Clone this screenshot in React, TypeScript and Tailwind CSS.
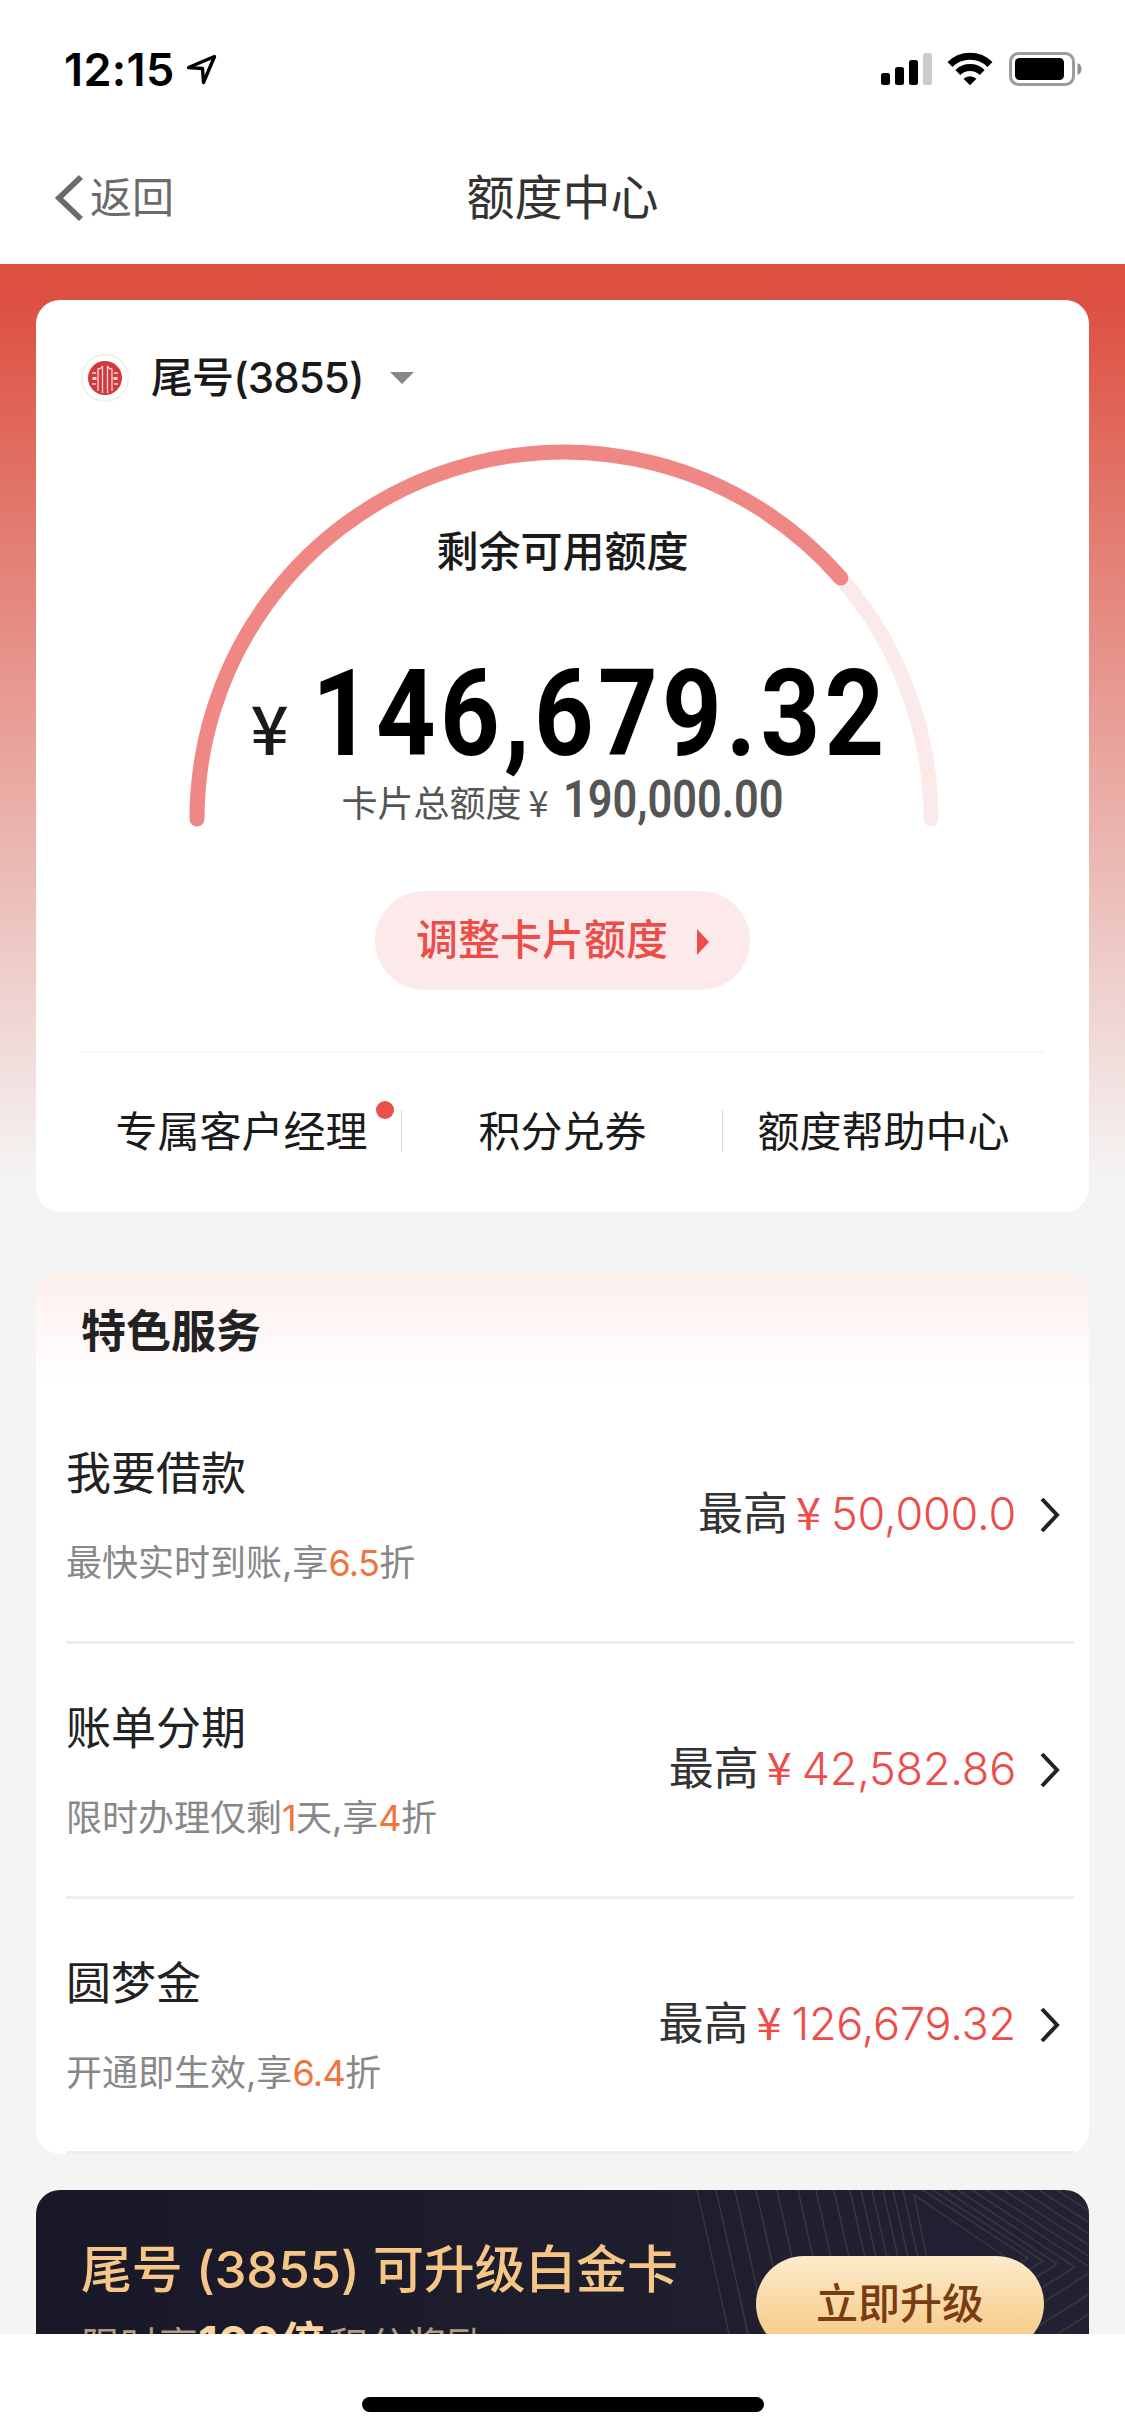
import type { ReactNode } from 'react'

const actions = [
  { label: '专属客户经理', dot: true },
  { label: '积分兑券', dot: false },
  { label: '额度帮助中心', dot: false },
]

const services = [
  { title: '我要借款', desc: ['最快实时到账,享', '6.5', '折'], amount: '50,000.0' },
  { title: '账单分期', desc: ['限时办理仅剩', '1', '天,享', '4', '折'], amount: '42,582.86' },
  { title: '圆梦金', desc: ['开通即生效,享', '6.4', '折'], amount: '126,679.32' },
]

function StatusBar() {
  return (
    <div className="h-[132px] flex items-start justify-between pl-[64px] pr-[43px] pt-[52px]">
      <div className="flex items-center gap-[11px] h-[34px]">
        <span className="text-[45px] leading-none font-semibold tracking-[0.4px] text-black">12:15</span>
        <svg width="31" height="31" viewBox="0 0 31 31" fill="none" stroke="#000" strokeWidth="3.4" strokeLinejoin="round">
          <path d="M28.500 2.500 L2.500 13.500 L16.500 14.500 L17.500 28.500 Z" />
        </svg>
      </div>
      <svg width="201" height="34" viewBox="0 0 201 34">
        <rect x="0" y="21" width="9" height="12" rx="2.5" />
        <rect x="14" y="15" width="9" height="18" rx="2.5" />
        <rect x="28" y="8" width="9" height="25" rx="2.5" />
        <rect x="42" y="1" width="9" height="32" rx="2.5" fill="#cbcbcb" />
        {/* wifi */}
        <g fill="none" stroke="#000" strokeWidth="7">
          <path d="M69 12.5 a28.5 28.5 0 0 1 40 0" />
          <path d="M76.800 20.500 a17.500 17.500 0 0 1 24.400 0" />
        </g>
        <path d="M82.500 26.800 a9.500 9.500 0 0 1 13 0 L89 33.300 Z" />
        {/* battery */}
        <rect x="129.5" y="1.5" width="63" height="31" rx="8" fill="none" stroke="#9c9c9c" strokeWidth="3" />
        <rect x="134" y="6" width="49" height="22" rx="4.5" />
        <path d="M196.500 11 a6.500 6.500 0 0 1 0 12 Z" fill="#8f8f8f" />
      </svg>
    </div>
  )
}

function NavBar() {
  return (
    <div className="h-[132px] grid grid-cols-3 items-center px-[54px]">
      <div className="flex items-center gap-[7px] text-[#6b6b6b]">
        <svg width="29" height="48" viewBox="0 0 29 48" fill="none" stroke="currentColor" strokeWidth="5.8">
          <path d="M27 3 L5 24 L27 45" />
        </svg>
        <span className="text-[42px] leading-none">返回</span>
      </div>
      <h1 className="text-[48px] leading-none text-center text-[#333]">额度中心</h1>
    </div>
  )
}

function BankLogo() {
  return (
    <svg width="48" height="48" viewBox="0 0 48 48">
      <circle cx="24" cy="24" r="23.3" fill="#fff" stroke="#ececec" strokeWidth="1.2" />
      <circle cx="24" cy="24" r="17" fill="#d2383c" />
      <g fill="none" stroke="#f7d9d9" strokeWidth="1.3">
        <path d="M17 37 V15 q4 -0.500 4.500 -3 V39" />
        <path d="M31 37 V15 q-4 -0.500 -4.500 -3 V39" />
        <path d="M11 19 h4 M11 30 h4 M33 19 h4 M33 30 h4" />
        <path d="M11.500 24.500 h4 M32.500 24.500 h4" strokeWidth="3" />
      </g>
    </svg>
  )
}

function Gauge({ used, children }: { used: number; children: ReactNode }) {
  const r = 367
  const angle = Math.PI * (1 - used)
  const x = 376 + r * Math.cos(angle)
  const y = 375 - r * Math.sin(angle)
  return (
    <div className="relative w-[750px] h-[383px] mx-auto">
      <svg className="absolute inset-0" width="752" height="384" viewBox="0 0 752 384" fill="none" strokeWidth="15" strokeLinecap="round">
        <path d="M9 375 A367 367 0 0 1 743 375" stroke="#fceaea" />
        <path d={`M9 375 A${r} ${r} 0 0 1 ${x} ${y}`} stroke="#ef8785" />
      </svg>
      <div className="relative flex flex-col">{children}</div>
    </div>
  )
}

function CreditCard() {
  return (
    <section className="mx-9 h-[912px] rounded-[24px] bg-white pt-[54px] flex flex-col">
      <div className="flex items-center pl-[45px] h-[48px]">
        <BankLogo />
        <span className="ml-[22px] text-[42px] leading-none font-medium tracking-[-0.9px] text-[#1a1a1a]">尾号(3855)</span>
        <svg className="ml-[27px]" width="24" height="12" viewBox="0 0 24 12">
          <path d="M0 0 H24 L12 12 Z" fill="#888" />
        </svg>
      </div>

      <div className="pt-[42px]">
        <Gauge used={146679.32 / 190000}>
          <div className="pt-[87px] text-center text-[42px] leading-[42px] font-medium text-[#1a1a1a]">剩余可用额度</div>
          <div className="flex items-baseline h-[100px] mt-[91px] pl-[63px]">
            <span className="w-[61px] shrink-0 font-['Noto_Sans_CJK_SC'] text-[67px] leading-none font-medium text-[#1a1a1a]">¥</span>
            <span className="shrink-0 font-[Roboto] text-[121px] leading-[100px] font-bold tracking-[5px] text-black origin-left scale-x-[0.86] whitespace-nowrap">146,679.32</span>
          </div>
          <div className="flex items-baseline h-[52px] mt-[10px] pl-[154px] text-[#555]">
            <span className="text-[36px] leading-none">卡片总额度</span>
            <span className="w-[41px] pl-[7px] font-['Noto_Sans_CJK_SC'] text-[36px] leading-none">¥</span>
            <span className="font-[Roboto] text-[51px] leading-[52px] font-semibold origin-left scale-x-[0.85] whitespace-nowrap">190,000.00</span>
          </div>
        </Gauge>
      </div>

      <button className="mx-auto mt-[64px] w-[375px] h-[99px] shrink-0 rounded-full bg-[#fceaea] flex items-center pb-[2px] pl-[41px] text-[42px] leading-none font-medium text-[#ed4c48]">
        调整卡片额度
        <svg className="ml-[29px] mt-[5px]" width="12" height="26" viewBox="0 0 12 26">
          <path d="M0 0 L12 13 L0 26 Z" fill="currentColor" />
        </svg>
      </button>

      <div className="mx-[45px] mt-[61px] border-t-2 border-[#f6f6f6] grid grid-cols-3 pt-[57px]">
        {actions.map((a, i) => (
          <div key={a.label} className="flex items-center justify-center h-[42px] relative text-[42px] leading-none text-[#1a1a1a]">
            <span className="pt-[2px]">{a.label}</span>
            {a.dot && <i className="absolute right-[8px] -top-[9px] size-[18px] rounded-full bg-[#ea4f49]" />}
            {i < 2 && <i className="absolute right-0 top-0 w-[1px] h-[42px] bg-[#d8d8d8]" />}
          </div>
        ))}
      </div>
    </section>
  )
}

function ServiceRow({ title, desc, amount }: { title: string; desc: string[]; amount: string }) {
  return (
    <div className="ml-[30px] mr-[15px] h-[255px] flex items-center justify-between border-b-[3px] border-[#ededed] text-[#222]">
      <div className="pt-[1px]">
        <div className="text-[45px] leading-[45px]">{title}</div>
        <div className="mt-[49px] text-[36px] leading-[36px] text-[#888]">
          {desc.map((part, i) => (
            <span key={i} className={i % 2 ? 'tracking-[-0.7px] text-[#f2733b]' : undefined}>{part}</span>
          ))}
        </div>
      </div>
      <div className="flex items-center pr-[14px]">
        <div className="flex items-baseline pb-[6px] text-[45px] leading-none text-[#ed4c48]">
          <span className="text-[#333]">最高</span>
          <span className="ml-[8px] w-[35px] font-['Noto_Sans_CJK_SC']">¥</span>
          <span className="font-[350] tracking-[-0.2px]">{amount}</span>
        </div>
        <svg className="ml-[24px]" width="20" height="36" viewBox="0 0 20 36" fill="none" stroke="#222" strokeWidth="4">
          <path d="M2 2 L17 18 L2 34" />
        </svg>
      </div>
    </div>
  )
}

function Services() {
  return (
    <section className="mx-9 mt-[60px] rounded-[24px] bg-white bg-[linear-gradient(#fdefee,#fff_114px)]">
      <h2 className="h-[117px] pl-[45px] pt-[37px] text-[45px] leading-[45px] font-bold text-[#222]">特色服务</h2>
      {services.map((s) => (
        <ServiceRow key={s.title} {...s} />
      ))}
    </section>
  )
}

function BannerLines() {
  const rays = [661, 680, 699, 720, 741, 762, 780, 798, 814, 825, 836, 847, 857, 867]
  // start on the top edge, then the corner point
  const corners = [
    [887, 992, 68],
    [897, 1007, 71],
    [909, 1021, 74],
    [922, 1039, 77],
    [936, 1058, 80],
  ]
  const slants = [951, 968, 985, 1003, 1021]
  const risers = [104, 124]
  return (
    <svg className="absolute inset-0" width="1053" height="144" viewBox="0 0 1053 144" fill="none" stroke="#38363d" strokeWidth="1.5">
      {rays.map((x) => (
        <path key={x} d={`M${x} 0 l32 144`} />
      ))}
      <path d="M906 144 L878 5 L980 74" />
      {corners.map(([x, cx, cy]) => (
        <path key={x} d={`M${x} 0 L${cx} ${cy} l-110 70`} />
      ))}
      {slants.map((x) => (
        <path key={x} d={`M${x} 0 l140 91`} />
      ))}
      {risers.map((y) => (
        <path key={y} d={`M1053 ${y} l-110 70`} />
      ))}
    </svg>
  )
}

function UpgradeBanner() {
  return (
    <section className="relative mx-9 mt-9 h-[144px] rounded-t-[24px] overflow-hidden bg-linear-to-r from-[#181828] to-[#222234]">
      <BannerLines />
      <div className="relative flex justify-between px-[45px]">
        <div className="pt-[54px]">
          <div className="text-[51px] leading-[51px] font-medium tracking-[-0.2px] text-[#f5c685]">尾号 (3855) 可升级白金卡</div>
          <div className="mt-[18px] h-[60px] flex items-baseline text-[39px] leading-[60px] text-[#b59c80]">
            限时享<b className="text-[46px] text-[#fbd5a0]">100倍</b>
            <span className="ml-[3px]">积分奖励</span>
          </div>
        </div>
        <button className="mt-[66px] w-[288px] h-[96px] rounded-full bg-linear-to-b from-[#fcebca] to-[#f5c67c] text-[42px] leading-none font-medium text-[#7a3c12]">立即升级</button>
      </div>
    </section>
  )
}

export default function App() {
  return (
    <div className="w-[1125px] h-[2436px] overflow-hidden bg-white flex flex-col font-[Inter,'Noto_Sans_CJK_SC',sans-serif]">
      <StatusBar />
      <NavBar />
      <main className="h-[2070px] overflow-hidden bg-[#f4f4f4] bg-[linear-gradient(#dd4f3f_0,#dd5142_40px,#f4f4f4_915px)] pt-9">
        <CreditCard />
        <Services />
        <UpgradeBanner />
      </main>
      <div className="flex-1 flex justify-center pt-[63px]">
        <div className="w-[402px] h-[15px] rounded-full bg-black" />
      </div>
    </div>
  )
}
